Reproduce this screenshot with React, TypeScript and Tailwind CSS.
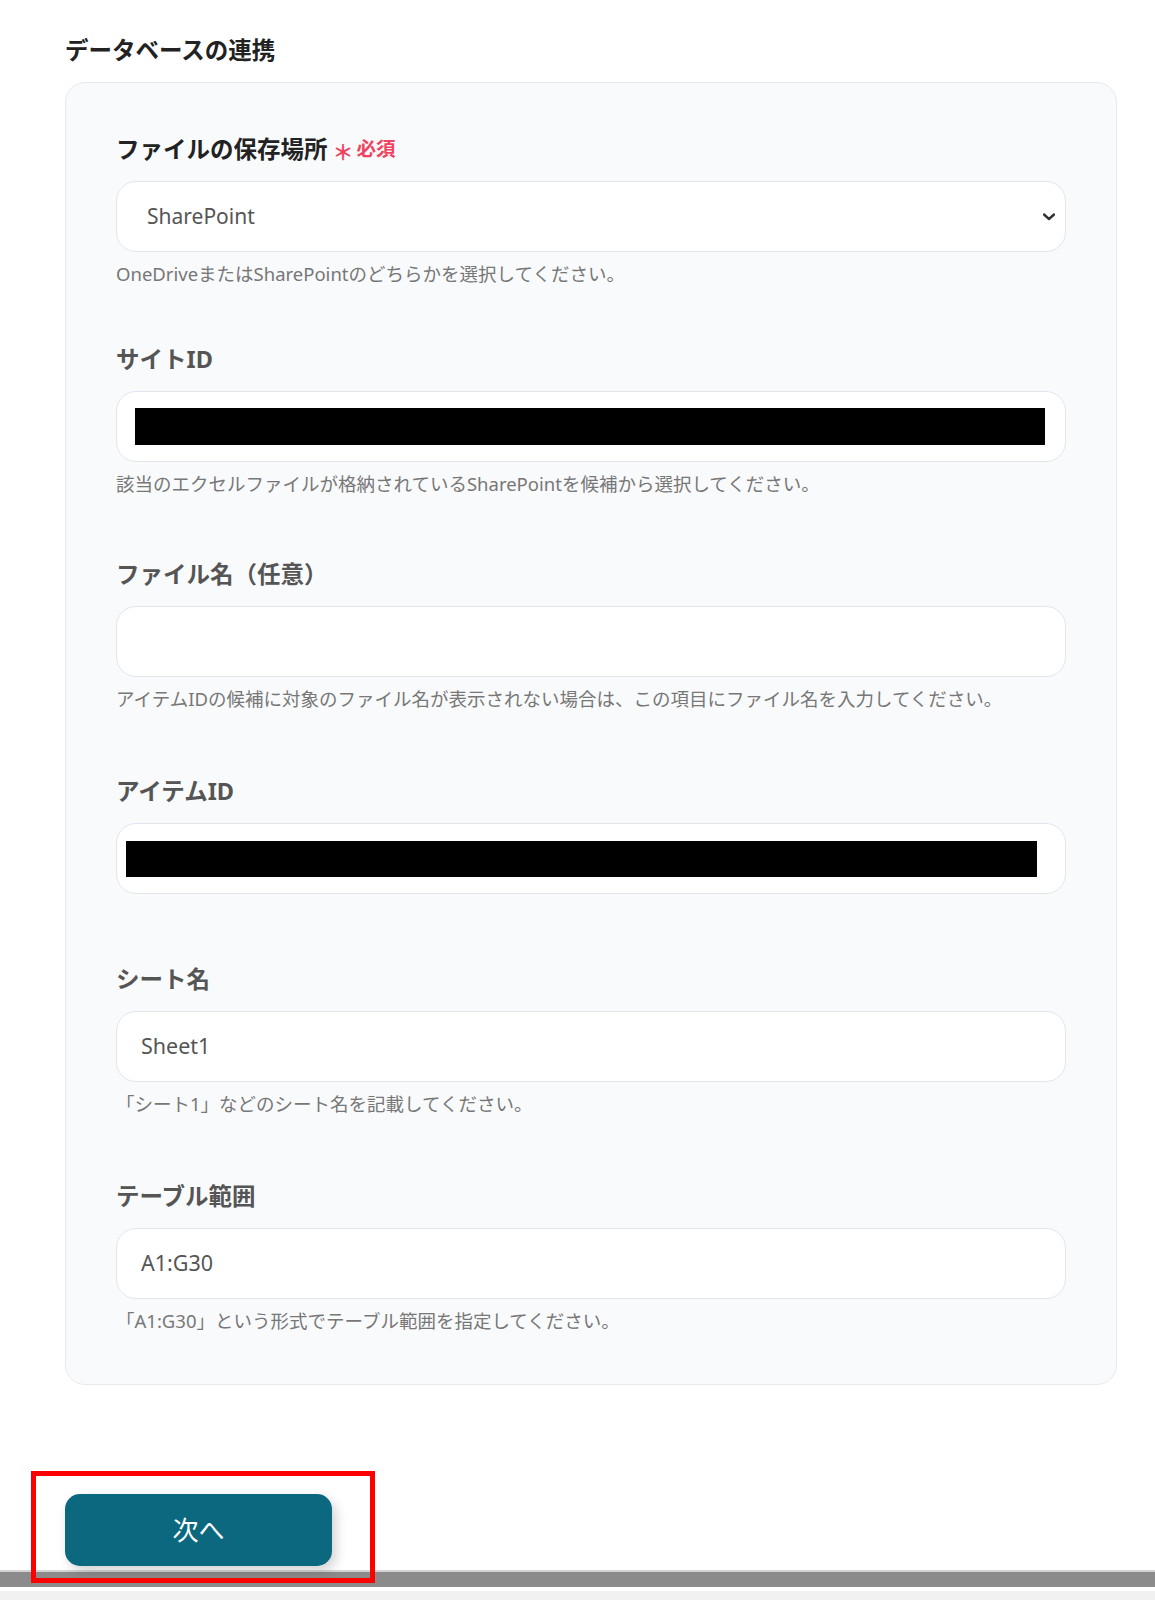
import React from 'react';

const font = { fontFamily: '"Noto Sans", "Noto Sans CJK JP", sans-serif' };

function Field({ label, labelClass = 'text-[#555]', extra, help, className = '', children }: any) {
    return (
        <div className={className}>
            <div className={`flex items-center text-[23.5px] leading-[32px] font-bold mb-[16px] ${labelClass}`}>
                {label}
                {extra}
            </div>
            {children}
            {help && <p className="mt-[9px] text-[18.5px] leading-[26px] text-[#777]">{help}</p>}
        </div>
    );
}

export default function App() {
    const box = 'h-[71px] bg-white border border-[#e2e6ec] rounded-[20px] flex items-center';

    return (
        <div className="min-h-[1600px] w-full bg-white flex flex-col relative overflow-hidden" style={font}>
            <div className="pl-[65px] pr-[38px] pt-[34px]">
                <h2 className="text-[23.5px] leading-[32px] font-bold text-[#222] mb-[16px]">データベースの連携</h2>

                <div className="bg-[#f9fafb] border border-[#e6e9ee] rounded-[20px] p-[50px]">
                    <Field
                        label="ファイルの保存場所"
                        labelClass="text-[#222]"
                        extra={
                            <span className="ml-[5px] flex items-center text-[#f0435f] text-[19.5px] font-bold">
                                <span className="translate-y-[3px] text-[21px]">＊</span>
                                <span className="ml-[3px]">必須</span>
                            </span>
                        }
                        help="OneDriveまたはSharePointのどちらかを選択してください。"
                    >
                        <div className={`${box} justify-between pl-[30px] pr-[10px]`}>
                            <span className="text-[21px] text-[#555]">SharePoint</span>
                            <svg width="12" height="8" viewBox="0 0 12 8" className="mt-[1px]">
                                <polyline points="1,1.5 6,6 11,1.5" fill="none" stroke="#333" strokeWidth="2.4" strokeLinecap="round" strokeLinejoin="round" />
                            </svg>
                        </div>
                    </Field>

                    <Field
                        className="mt-[56px]"
                        label="サイトID"
                        help="該当のエクセルファイルが格納されているSharePointを候補から選択してください。"
                    >
                        <div className={`${box} pl-[18px] pr-[20px]`}>
                            <div className="h-[37px] w-full bg-black" />
                        </div>
                    </Field>

                    <Field
                        className="mt-[61px]"
                        label="ファイル名（任意）"
                        help="アイテムIDの候補に対象のファイル名が表示されない場合は、この項目にファイル名を入力してください。"
                    >
                        <div className={box} />
                    </Field>

                    <Field className="mt-[63px]" label="アイテムID">
                        <div className={`${box} pl-[9px] pr-[28px]`}>
                            <div className="h-[36px] w-full bg-black" />
                        </div>
                    </Field>

                    <Field
                        className="mt-[69px]"
                        label="シート名"
                        help="「シート1」などのシート名を記載してください。"
                    >
                        <div className={`${box} pl-[24px]`}>
                            <span className="text-[21.5px] text-[#555]">Sheet1</span>
                        </div>
                    </Field>

                    <Field
                        className="mt-[63px]"
                        label="テーブル範囲"
                        help="「A1:G30」という形式でテーブル範囲を指定してください。"
                    >
                        <div className={`${box} pl-[24px]`}>
                            <span className="text-[21.5px] text-[#555]">A1:G30</span>
                        </div>
                    </Field>
                </div>

                <div className="mt-[109px] relative w-[267px]">
                    <button className="w-[267px] h-[72px] rounded-[15px] bg-[#0b687f] text-white text-[26px] shadow-[4px_5px_12px_rgba(0,0,0,0.18)]">
                        次へ
                    </button>
                    <div className="absolute z-10 left-[-34px] top-[-23px] w-[344px] h-[112px] border-[5px] border-[#ff0000]" />
                </div>
            </div>

            <div className="mt-auto">
                <div className="h-[2px] bg-[#d4d4d4]" />
                <div className="h-[15px] bg-[#8b8b8b]" />
                <div className="h-[4px] bg-white" />
                <div className="h-[9px] bg-[#f1f1f1]" />
            </div>
        </div>
    );
}
